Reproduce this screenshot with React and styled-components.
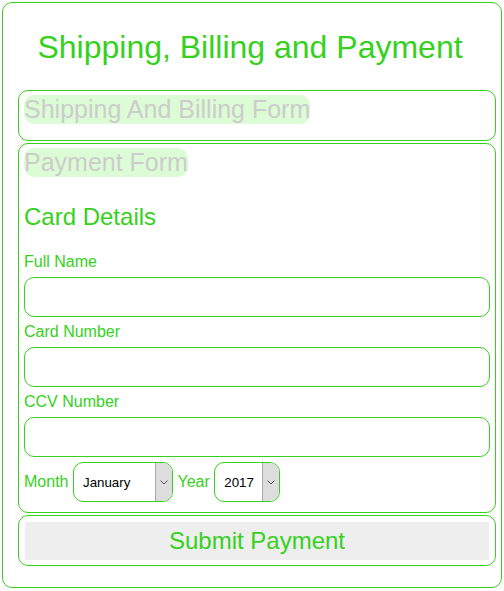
import React from "react";
import styled, { createGlobalStyle } from "styled-components";

const GREEN = "#35d11c";

const Global = createGlobalStyle`
  html, body { margin: 0; padding: 0; background: #fff; }
  body { font-family: "Liberation Sans", Arial, sans-serif; }
  * { box-sizing: border-box; }
`;

const Container = styled.div`
  margin: 2px;
  border: 1px solid ${GREEN};
  border-radius: 10px;
  padding: 0 0 21px 0;
  display: flex;
  flex-direction: column;
`;

const Title = styled.h1`
  margin: 26px 0 24px 0;
  padding-right: 4px;
  font-size: 32px;
  font-weight: normal;
  color: ${GREEN};
  text-align: center;
  line-height: normal;
`;

const Section = styled.div`
  margin: ${(p) => (p.$first ? "0" : "2px")} 5px 0 15px;
  border: 1px solid ${GREEN};
  border-radius: 10px;
  padding: ${(p) => p.$pad || "4px 5px 16px 5px"};
  display: flex;
  flex-direction: column;
  align-items: stretch;
`;

const Legend = styled.div`
  align-self: flex-start;
  font-size: 25px;
  line-height: normal;
  color: #cccccc;
  background: #dcfcd5;
  border-radius: 10px;
`;

const Heading = styled.div`
  margin: 26px 0 22px 0;
  font-size: 24px;
  line-height: normal;
  color: ${GREEN};
`;

const Label = styled.label`
  display: block;
  font-size: 16px;
  line-height: 18px;
  color: ${GREEN};
  margin-bottom: 6px;
`;

const Input = styled.input`
  display: block;
  width: 100%;
  height: 40px;
  margin: 0 0 ${(p) => p.$mb || "6px"} 0;
  border: 1px solid ${GREEN};
  border-radius: 10px;
  background: #fff;
  outline: none;
  font: 16px "Liberation Sans", Arial, sans-serif;
  padding: 0 8px;
`;

const Row = styled.div`
  display: flex;
  align-items: center;
  gap: 4.5px;
`;

const InlineLabel = styled.span`
  font-size: 16px;
  color: ${GREEN};
`;

const SelectWrap = styled.div`
  position: relative;
  width: ${(p) => p.$w}px;
  height: 40px;
  border: 1px solid ${GREEN};
  border-radius: 10px;
  overflow: hidden;
  background: #fff;
`;

const Select = styled.select`
  appearance: none;
  -webkit-appearance: none;
  width: 100%;
  height: 100%;
  border: none;
  outline: none;
  background: transparent;
  padding: 1px 0 0 9px;
  font: 13.33px "Liberation Sans", Arial, sans-serif;
  color: #000;
`;

const Arrow = styled.span`
  position: absolute;
  top: 0;
  right: 0;
  bottom: 0;
  width: 17px;
  background: #dddddd;
  border-left: 1px solid #a8a8a8;
  display: flex;
  align-items: center;
  justify-content: center;
  pointer-events: none;
`;

const Button = styled.button`
  height: 38px;
  border: none;
  background: #eeeeee;
  color: ${GREEN};
  font: 24px "Liberation Sans", Arial, sans-serif;
  padding: 0;
  cursor: pointer;
`;

const Chevron = () => (
  <svg width="8" height="5" viewBox="0 0 8 5">
    <path d="M0.5 0.5 L4 4 L7.5 0.5" fill="none" stroke="#555" strokeWidth="1" />
  </svg>
);

const SelectBox = ({ w, value, options }) => (
  <SelectWrap $w={w}>
    <Select defaultValue={value}>
      {options.map((o) => (
        <option key={o}>{o}</option>
      ))}
    </Select>
    <Arrow>
      <Chevron />
    </Arrow>
  </SelectWrap>
);

const months = [
  "January", "February", "March", "April", "May", "June",
  "July", "August", "September", "October", "November", "December",
];
const years = ["2017", "2018", "2019", "2020", "2021", "2022"];

export default function App() {
  return (
    <>
      <Global />
      <Container>
        <Title>Shipping, Billing and Payment</Title>
        <Section $first>
          <Legend>Shipping And Billing Form</Legend>
        </Section>
        <Section $pad="4px 5px 10px 5px">
          <Legend>Payment Form</Legend>
          <Heading>Card Details</Heading>
          <Label>Full Name</Label>
          <Input type="text" />
          <Label>Card Number</Label>
          <Input type="text" />
          <Label>CCV Number</Label>
          <Input type="text" $mb="5px" />
          <Row>
            <InlineLabel>Month</InlineLabel>
            <SelectBox w={100} value="January" options={months} />
            <InlineLabel>Year</InlineLabel>
            <SelectBox w={66} value="2017" options={years} />
          </Row>
        </Section>
        <Section $pad="6px 6px 5px 6px">
          <Button>Submit Payment</Button>
        </Section>
      </Container>
    </>
  );
}
